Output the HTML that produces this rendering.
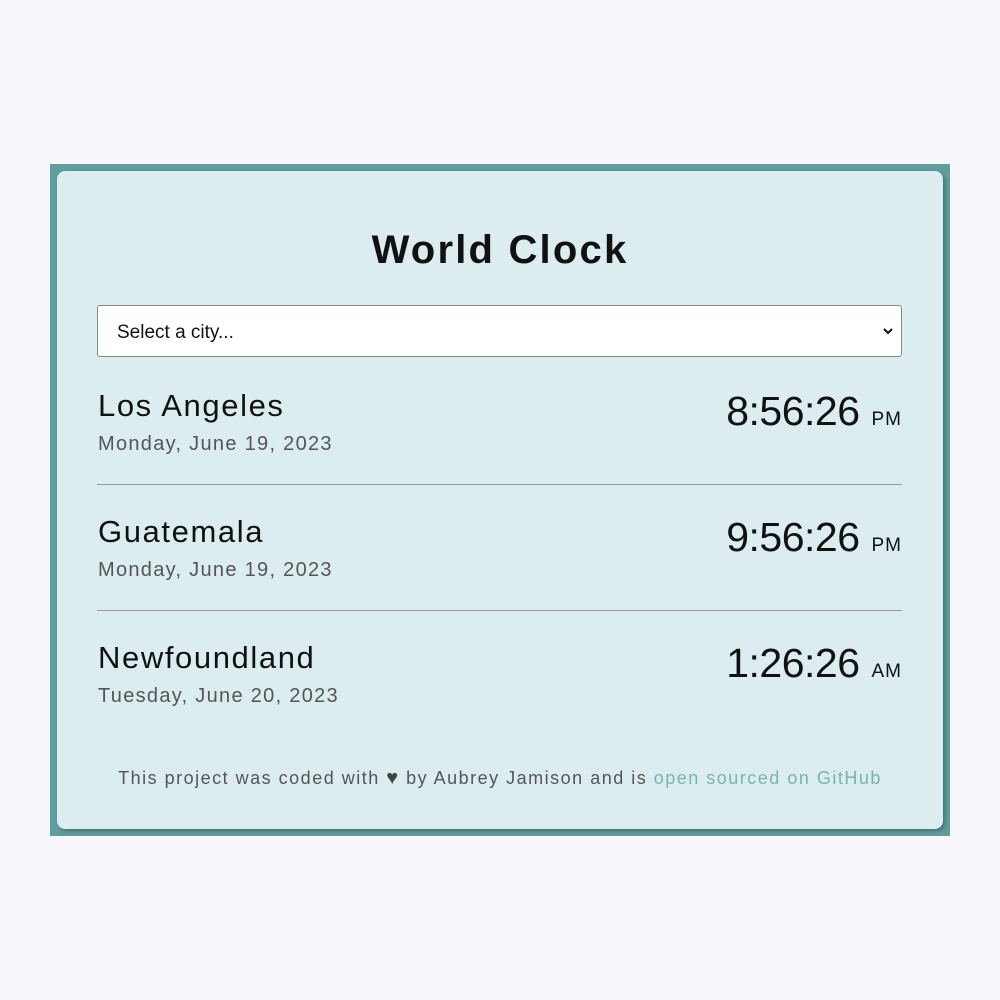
<!DOCTYPE html>
<html><head><style>
body{margin:0;background:#f7f7fc;width:1000px;height:1000px;position:relative;font-family:"Liberation Sans",sans-serif;}
.outer{position:absolute;left:50px;top:164px;width:900px;height:672px;background:#5f9ea0;}
.card{position:absolute;left:7px;top:7px;width:886px;height:658px;background:#dbedef;border-radius:8px;box-shadow:2px 2px 4px rgba(0,0,0,.3);}
h1{position:absolute;top:226px;left:0;width:1000px;margin:0;text-align:center;font-size:40px;font-weight:bold;letter-spacing:2.2px;line-height:48px;color:#111;}
.sel{position:absolute;left:97px;top:305px;width:803px;height:50px;background:#fff;border:1px solid #888;border-radius:3px;font-size:19px;color:#111;}
.sel span{position:absolute;left:19px;top:16px;}
.sel svg{position:absolute;right:8px;top:21px;}
.row{position:absolute;left:97px;width:805px;height:126px;}
.city{position:absolute;left:1px;top:0;font-size:31px;letter-spacing:1.6px;color:#111;line-height:40px;}
.date{position:absolute;left:1px;top:46px;font-size:20px;letter-spacing:1.3px;color:#555;line-height:24px;}
.time{position:absolute;right:0;top:1px;font-size:41px;color:#111;line-height:48px;letter-spacing:-0.5px;}
.time small{font-size:19px;margin-left:12px;letter-spacing:1px;}
.line{position:absolute;left:97px;width:805px;height:1px;background:#999;}
.foot{position:absolute;left:0;width:1000px;top:764px;text-align:center;font-size:18px;letter-spacing:1.5px;color:#555;line-height:28px;}
.foot a{color:#7ab3b0;text-decoration:none;}
</style></head><body>
<div class="outer"><div class="card"></div></div>
<h1>World Clock</h1>
<div class="sel"><span>Select a city...</span><svg width="10" height="8" viewBox="0 0 10 8"><path d="M1 2 L5 6 L9 2" stroke="#111" stroke-width="2" fill="none"/></svg></div>
<div class="row" style="top:386px"><div class="city">Los Angeles</div><div class="date">Monday, June 19, 2023</div><div class="time">8:56:26<small>PM</small></div></div>
<div class="line" style="top:484px"></div>
<div class="row" style="top:512px"><div class="city">Guatemala</div><div class="date">Monday, June 19, 2023</div><div class="time">9:56:26<small>PM</small></div></div>
<div class="line" style="top:610px"></div>
<div class="row" style="top:638px"><div class="city">Newfoundland</div><div class="date">Tuesday, June 20, 2023</div><div class="time">1:26:26<small>AM</small></div></div>
<div class="foot">This project was coded with <span style="color:#444;font-size:20px">&#x2665;</span> by Aubrey Jamison and is <a>open sourced on GitHub</a></div>
</body></html>
